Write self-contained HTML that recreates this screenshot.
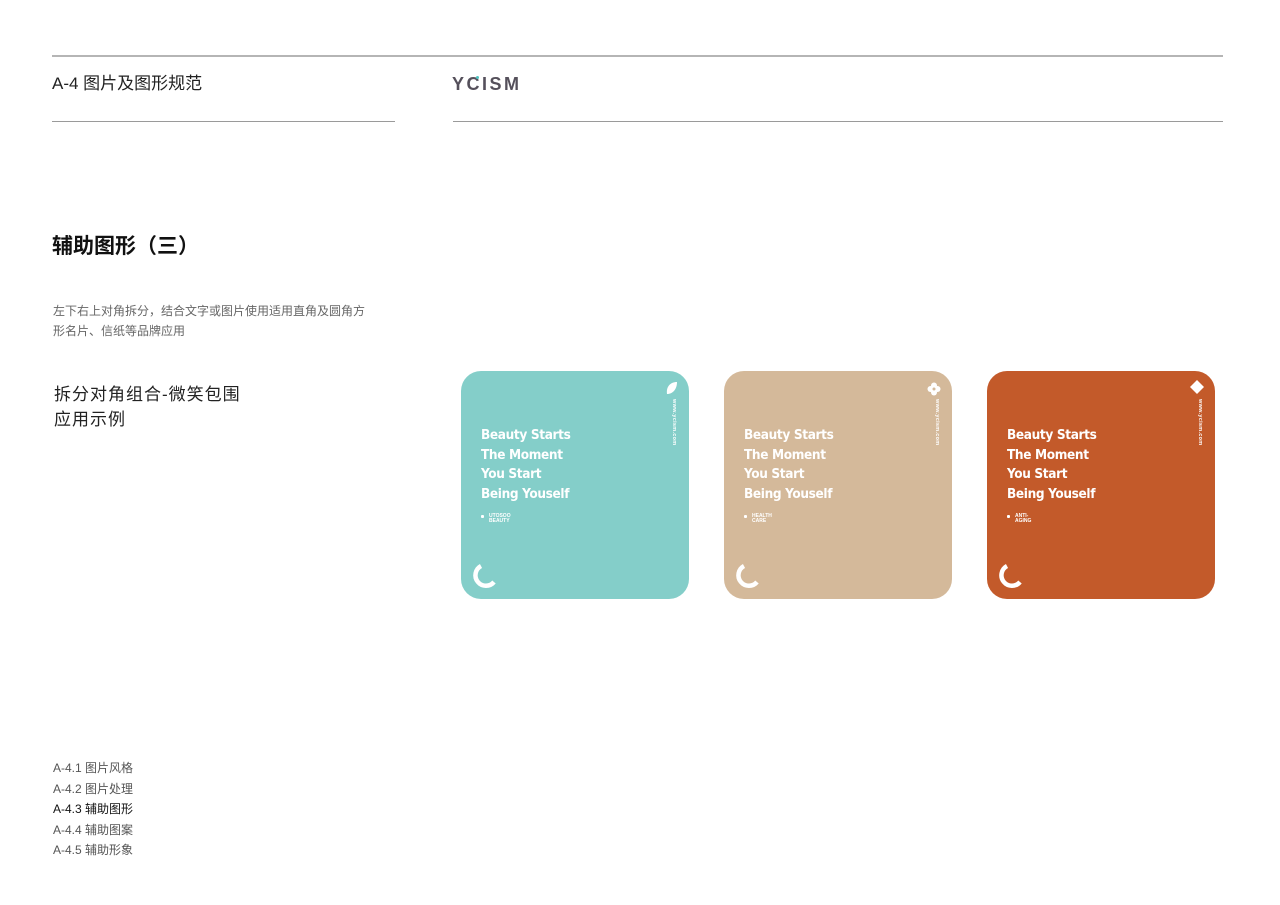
<!DOCTYPE html>
<html><head><meta charset="utf-8"><style>
*{margin:0;padding:0;box-sizing:border-box}
body{width:1280px;height:905px;background:#fff;position:relative;font-family:"Liberation Sans","Noto Sans CJK SC",sans-serif;color:#222;overflow:hidden}
.a{position:absolute;white-space:nowrap}
.line{position:absolute;height:1px;background:#9a9a9a}
.card{position:absolute;top:371px;width:228px;height:228px;border-radius:20px}
.card .t{position:absolute;left:20px;top:55px;color:#fff;font-family:"DejaVu Sans Condensed","Liberation Sans Narrow","Liberation Sans",sans-serif;font-weight:bold;font-size:13.5px;letter-spacing:-0.35px;line-height:19.5px}
.card .s{position:absolute;left:20px;top:143px;color:#fff;font-size:5px;font-weight:bold;line-height:5px;padding-left:8px}
.card .s:before{content:"";position:absolute;left:0;top:1px;width:3px;height:3px;background:#fff;border-radius:1px}
.card .v{position:absolute;right:12px;top:28px;writing-mode:vertical-rl;color:#fff;font-size:5.5px;font-weight:bold;letter-spacing:.3px}
.card svg.arc{position:absolute;left:0;top:180px}
.nav{font-size:12px;color:#555;line-height:20.5px}
</style></head><body>
<div class="line" style="left:52px;top:55px;width:1171px;height:2px;background:#b5b5b5"></div>
<div class="a" style="left:52px;top:69px;font-size:17px;color:#222">A-4 图片及图形规范</div>
<div class="a" style="left:452px;top:74px;font-size:18px;font-weight:bold;letter-spacing:2.5px;color:#55505b">Y<span style="position:relative">C<span style="position:absolute;left:9px;top:2px;width:3px;height:3px;background:#4ec3c0;border-radius:50%"></span></span>ISM</div>
<div class="line" style="left:52px;top:121px;width:343px"></div>
<div class="line" style="left:453px;top:121px;width:770px"></div>
<div class="a" style="left:52px;top:230px;font-size:21px;font-weight:bold;color:#111">辅助图形（三）</div>
<div class="a" style="left:53px;top:301px;font-size:12px;color:#666;line-height:20px">左下右上对角拆分，结合文字或图片使用适用直角及圆角方<br>形名片、信纸等品牌应用</div>
<div class="a" style="left:54px;top:382px;font-size:17px;color:#222;line-height:25px;letter-spacing:1px">拆分对角组合-微笑包围<br>应用示例</div>

<div class="card" style="left:461px;background:#84cec9">
<svg style="position:absolute;left:205px;top:10px" width="12" height="14" viewBox="0 0 12 14"><path d="M1 13 C0 6 4 1 11 1 C11 8 7 13 1 13Z" fill="#fff"/></svg>
<div class="v">www.ycism.com</div>
<div class="t">Beauty Starts<br>The Moment<br>You Start<br>Being Youself</div>
<div class="s">UTOSOO<br>BEAUTY</div>
<svg class="arc" width="48" height="48" viewBox="0 180 48 48"><path d="M20 195 A10.5 10.5 0 1 0 33 211" fill="none" stroke="#fff" stroke-width="4.5"/></svg>
</div>
<div class="card" style="left:724px;background:#d4b99a">
<svg style="position:absolute;left:203px;top:11px" width="14" height="14" viewBox="0 0 14 14" fill="#fff"><circle cx="7" cy="3.5" r="3"/><circle cx="10.5" cy="7" r="3"/><circle cx="7" cy="10.5" r="3"/><circle cx="3.5" cy="7" r="3"/><circle cx="7" cy="7" r="1.5" fill="#d4b99a"/></svg>
<div class="v">www.ycism.com</div>
<div class="t">Beauty Starts<br>The Moment<br>You Start<br>Being Youself</div>
<div class="s">HEALTH<br>CARE</div>
<svg class="arc" width="48" height="48" viewBox="0 180 48 48"><path d="M20 195 A10.5 10.5 0 1 0 33 211" fill="none" stroke="#fff" stroke-width="4.5"/></svg>
</div>
<div class="card" style="left:987px;background:#c35a2a">
<svg style="position:absolute;left:203px;top:9px" width="14" height="14" viewBox="0 0 14 14"><path d="M7 0L14 7 7 14 0 7Z" fill="#fff"/></svg>
<div class="v">www.ycism.com</div>
<div class="t">Beauty Starts<br>The Moment<br>You Start<br>Being Youself</div>
<div class="s">ANTI-<br>AGING</div>
<svg class="arc" width="48" height="48" viewBox="0 180 48 48"><path d="M20 195 A10.5 10.5 0 1 0 33 211" fill="none" stroke="#fff" stroke-width="4.5"/></svg>
</div>

<div class="a nav" style="left:53px;top:758px">A-4.1 图片风格<br>A-4.2 图片处理<br><span style="color:#111">A-4.3 辅助图形</span><br>A-4.4 辅助图案<br>A-4.5 辅助形象</div>
</body></html>
